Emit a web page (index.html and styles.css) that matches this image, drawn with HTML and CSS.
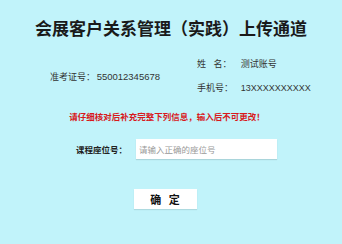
FILE: index.html
```html
<!DOCTYPE html>
<html lang="zh-CN">
<head>
    <meta charset="UTF-8">
    <meta name="viewport" content="width=device-width, initial-scale=1.0">
    <title>会展客户关系管理（实践）上传通道</title>
    <link rel="stylesheet" href="styles.css">
</head>
<body>
    <div id="page">
        <h1 id="title">会展客户关系管理（实践）上传通道</h1>

        <div id="info">
            <div class="info-left">
                <span class="info-label">准考证号：</span>
                <span class="info-value">550012345678</span>
            </div>
            <div class="info-right">
                <div class="info-row">
                    <span class="info-label">姓&nbsp;&nbsp;&nbsp;名：</span>
                    <span class="info-value">测试账号</span>
                </div>
                <div class="info-row">
                    <span class="info-label">手机号：</span>
                    <span class="info-value">13XXXXXXXXXX</span>
                </div>
            </div>
        </div>

        <p id="notice">请仔细核对后补充完整下列信息，输入后不可更改！</p>

        <div id="seat-row">
            <label for="seat-input">课程座位号：</label>
            <input type="text" id="seat-input" placeholder="请输入正确的座位号">
        </div>

        <div id="submit-row">
            <button id="submit-button">确&nbsp;&nbsp;&nbsp;定</button>
        </div>
    </div>
</body>
</html>
```

FILE: styles.css
```css
body {
    margin: 0;
    padding: 0;
    background-color: #c1f3fa;
    font-family: "Liberation Sans", "Noto Sans CJK SC", sans-serif;
    color: #333;
    width: 342px;
    height: 244px;
    overflow: hidden;
}

#page {
    display: flex;
    flex-direction: column;
}

#title {
    margin: 18px 0 0 0;
    font-size: 17px;
    line-height: 20px;
    font-weight: bold;
    color: #1a1a1a;
    text-align: center;
    font-family: "Noto Sans CJK SC", sans-serif;
}

#info {
    display: flex;
    flex-direction: row;
    align-items: center;
    margin-top: 19px;
    padding-left: 50px;
}

.info-left {
    width: 147px;
    font-size: 9.5px;
    white-space: nowrap;
}

.info-right {
    display: flex;
    flex-direction: column;
    gap: 10px;
    font-size: 9.5px;
}

.info-row {
    line-height: 13px;
    white-space: nowrap;
}

.info-label {
    display: inline-block;
    width: 41px;
    font-size: 9px;
    color: #333;
}

.info-left .info-label {
    width: 44px;
}

.info-value {
    color: #333;
}

.info-right .info-value {
    font-size: 9px;
}

#notice {
    margin: 16px 0 0 0;
    padding-right: 8px;
    text-align: center;
    font-size: 8.5px;
    line-height: 12px;
    font-weight: bold;
    color: #d8191c;
}

#seat-row {
    display: flex;
    align-items: center;
    margin-top: 16px;
    padding-left: 76px;
}

#seat-row label {
    width: 60px;
    font-size: 8.5px;
    font-weight: bold;
    color: #222;
    white-space: nowrap;
}

#seat-input {
    width: 141px;
    height: 20px;
    box-sizing: border-box;
    border: none;
    outline: none;
    padding: 0 3px;
    background-color: #fff;
    font-size: 8.5px;
    font-family: "Noto Sans CJK SC", sans-serif;
    box-shadow: 0 1px 1px rgba(0, 0, 0, 0.12);
}

#seat-input::placeholder {
    color: #999;
}

#submit-row {
    display: flex;
    justify-content: center;
    margin-top: 30px;
    padding-right: 12px;
}

#submit-button {
    width: 63px;
    height: 20px;
    border: none;
    background-color: #fff;
    font-size: 11px;
    font-weight: bold;
    color: #111;
    font-family: "Noto Sans CJK SC", sans-serif;
    padding: 0;
    box-shadow: 0 1px 1px rgba(0, 0, 0, 0.1);
    cursor: pointer;
}
```
